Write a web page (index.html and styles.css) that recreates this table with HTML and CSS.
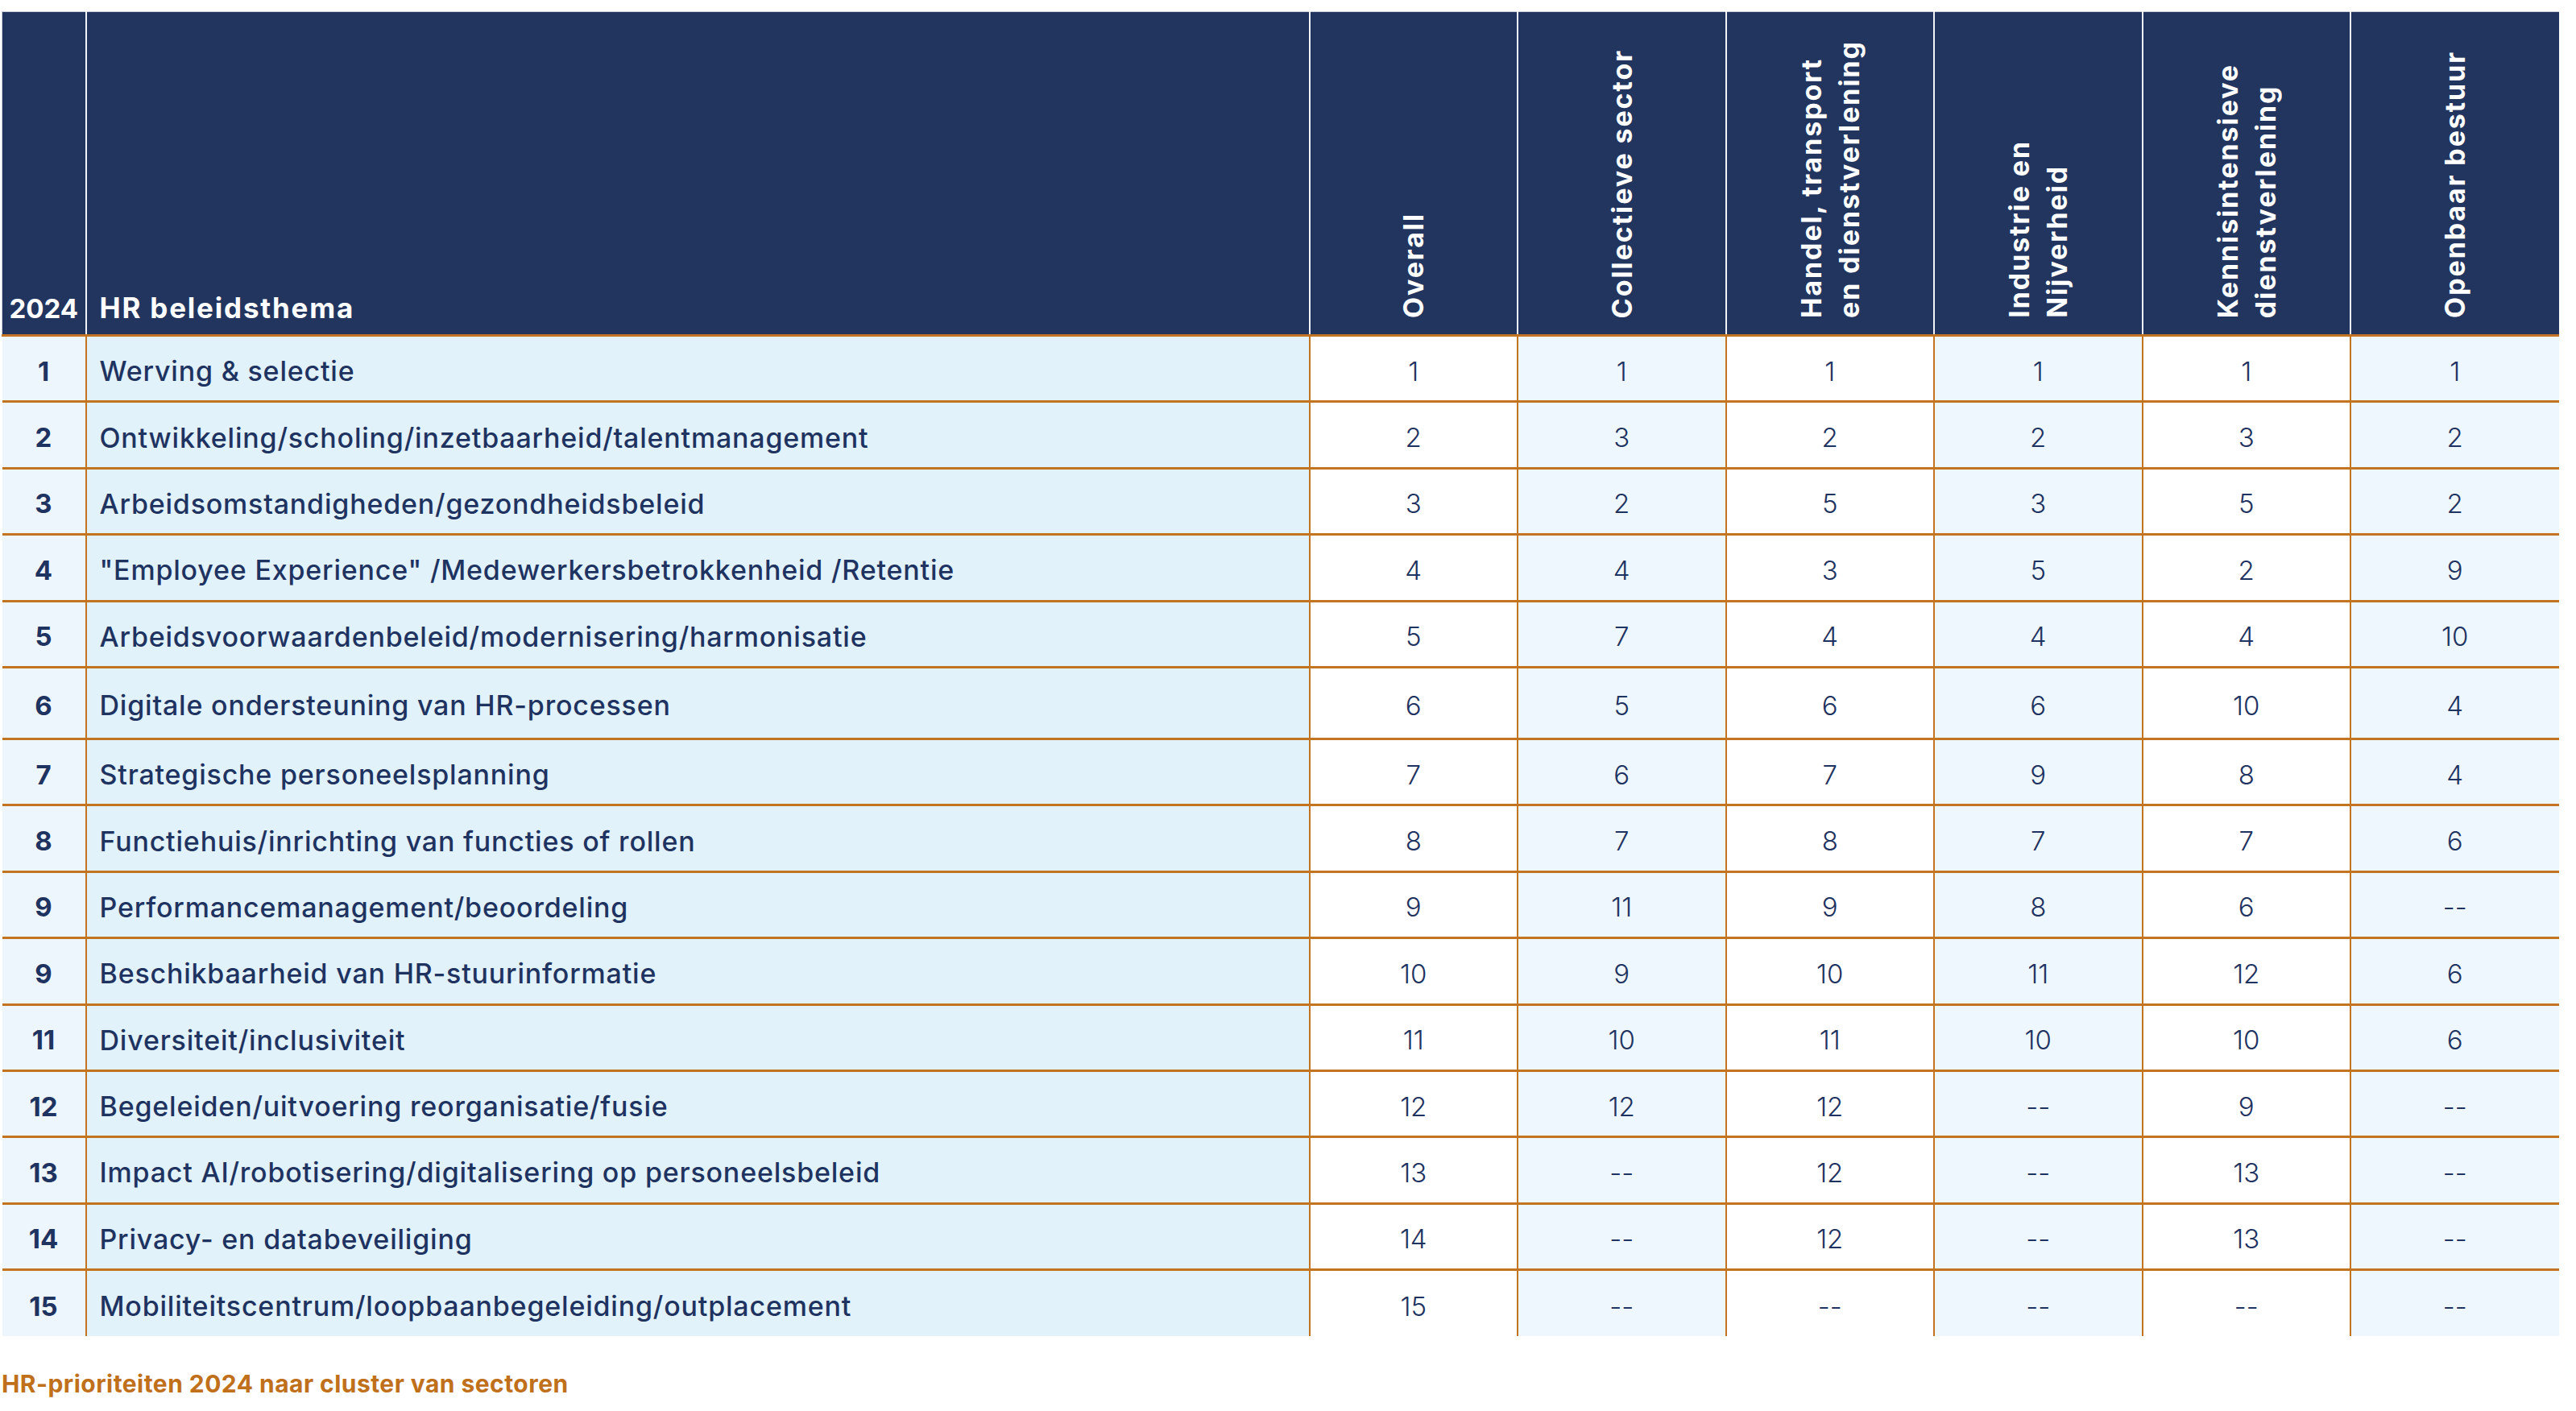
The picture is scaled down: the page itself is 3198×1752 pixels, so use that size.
FILE: index.html
```html
<!DOCTYPE html>
<html lang="nl">
<head>
<meta charset="utf-8">
<title>HR-prioriteiten 2024</title>
<link rel="stylesheet" href="styles.css">
</head>
<body>
<div class="page">
  <table class="grid">
    <colgroup>
      <col class="c-rank"><col class="c-theme">
      <col class="c-val"><col class="c-val"><col class="c-val"><col class="c-val"><col class="c-val"><col class="c-val">
    </colgroup>
    <thead>
      <tr>
        <th class="h-rank">2024</th>
        <th class="h-theme">HR beleidsthema</th>
        <th class="h-rot"><div class="rot">Overall</div></th>
        <th class="h-rot"><div class="rot">Collectieve sector</div></th>
        <th class="h-rot"><div class="rot">Handel, transport<br>en dienstverlening</div></th>
        <th class="h-rot"><div class="rot">Industrie en<br>Nijverheid</div></th>
        <th class="h-rot"><div class="rot">Kennisintensieve<br>dienstverlening</div></th>
        <th class="h-rot"><div class="rot">Openbaar bestuur</div></th>
      </tr>
    </thead>
    <tbody>
      <tr><td class="rank">1</td><td class="theme">Werving &amp; selectie</td><td class="v">1</td><td class="v alt">1</td><td class="v">1</td><td class="v alt">1</td><td class="v">1</td><td class="v alt">1</td></tr>
      <tr><td class="rank">2</td><td class="theme">Ontwikkeling/scholing/inzetbaarheid/talentmanagement</td><td class="v">2</td><td class="v alt">3</td><td class="v">2</td><td class="v alt">2</td><td class="v">3</td><td class="v alt">2</td></tr>
      <tr><td class="rank">3</td><td class="theme">Arbeidsomstandigheden/gezondheidsbeleid</td><td class="v">3</td><td class="v alt">2</td><td class="v">5</td><td class="v alt">3</td><td class="v">5</td><td class="v alt">2</td></tr>
      <tr><td class="rank">4</td><td class="theme">"Employee Experience" /Medewerkersbetrokkenheid /Retentie</td><td class="v">4</td><td class="v alt">4</td><td class="v">3</td><td class="v alt">5</td><td class="v">2</td><td class="v alt">9</td></tr>
      <tr><td class="rank">5</td><td class="theme">Arbeidsvoorwaardenbeleid/modernisering/harmonisatie</td><td class="v">5</td><td class="v alt">7</td><td class="v">4</td><td class="v alt">4</td><td class="v">4</td><td class="v alt">10</td></tr>
      <tr class="tall"><td class="rank">6</td><td class="theme">Digitale ondersteuning van HR-processen</td><td class="v">6</td><td class="v alt">5</td><td class="v">6</td><td class="v alt">6</td><td class="v">10</td><td class="v alt">4</td></tr>
      <tr><td class="rank">7</td><td class="theme">Strategische personeelsplanning</td><td class="v">7</td><td class="v alt">6</td><td class="v">7</td><td class="v alt">9</td><td class="v">8</td><td class="v alt">4</td></tr>
      <tr><td class="rank">8</td><td class="theme">Functiehuis/inrichting van functies of rollen</td><td class="v">8</td><td class="v alt">7</td><td class="v">8</td><td class="v alt">7</td><td class="v">7</td><td class="v alt">6</td></tr>
      <tr><td class="rank">9</td><td class="theme">Performancemanagement/beoordeling</td><td class="v">9</td><td class="v alt">11</td><td class="v">9</td><td class="v alt">8</td><td class="v">6</td><td class="v alt">--</td></tr>
      <tr><td class="rank">9</td><td class="theme">Beschikbaarheid van HR-stuurinformatie</td><td class="v">10</td><td class="v alt">9</td><td class="v">10</td><td class="v alt">11</td><td class="v">12</td><td class="v alt">6</td></tr>
      <tr><td class="rank">11</td><td class="theme">Diversiteit/inclusiviteit</td><td class="v">11</td><td class="v alt">10</td><td class="v">11</td><td class="v alt">10</td><td class="v">10</td><td class="v alt">6</td></tr>
      <tr><td class="rank">12</td><td class="theme">Begeleiden/uitvoering reorganisatie/fusie</td><td class="v">12</td><td class="v alt">12</td><td class="v">12</td><td class="v alt">--</td><td class="v">9</td><td class="v alt">--</td></tr>
      <tr><td class="rank">13</td><td class="theme">Impact AI/robotisering/digitalisering op personeelsbeleid</td><td class="v">13</td><td class="v alt">--</td><td class="v">12</td><td class="v alt">--</td><td class="v">13</td><td class="v alt">--</td></tr>
      <tr><td class="rank">14</td><td class="theme">Privacy- en databeveiliging</td><td class="v">14</td><td class="v alt">--</td><td class="v">12</td><td class="v alt">--</td><td class="v">13</td><td class="v alt">--</td></tr>
      <tr class="last"><td class="rank">15</td><td class="theme">Mobiliteitscentrum/loopbaanbegeleiding/outplacement</td><td class="v">15</td><td class="v alt">--</td><td class="v">--</td><td class="v alt">--</td><td class="v">--</td><td class="v alt">--</td></tr>
    </tbody>
  </table>
  <p class="caption">HR-prioriteiten 2024 naar cluster van sectoren</p>
</div>
</body>
</html>
```

FILE: styles.css
```css
html, body {
  margin: 0;
  padding: 0;
  background: #ffffff;
}

.page {
  padding: 14px 0 0 2px;
  font-family: Inter, "Open Sans", sans-serif;
  color: #1f3361;
}

.grid {
  width: 3174px;
  border-collapse: collapse;
  table-layout: fixed;
}

.c-rank { width: 104px; }
.c-theme { width: 1519px; }
.c-val { width: 258.5px; }

thead th {
  background: #22355f;
  color: #ffffff;
  font-weight: 700;
  height: 402px;
  padding: 0 0 16px 0;
  vertical-align: bottom;
  border-top: 1px solid #c9ccd4;
  border-left: 2px solid #f2f3f6;
  border-bottom: 3px solid #c27420;
  box-sizing: border-box;
}

thead th:first-child { border-left: 1px solid #c9ccd4; }

.h-rank {
  font-size: 33px;
  text-align: center;
  padding-bottom: 12px;
}

.h-theme {
  font-size: 35px;
  letter-spacing: 1.8px;
  text-align: left;
  padding-left: 16px;
  padding-bottom: 12px;
}

.h-rot {
  text-align: center;
}

.rot {
  display: inline-block;
  writing-mode: vertical-rl;
  transform: rotate(180deg);
  text-align: start;
  font-size: 34px;
  line-height: 47px;
  letter-spacing: 1.9px;
  white-space: nowrap;
}

tbody tr { height: 82.4px; }
tbody tr.tall { height: 89px; }

tbody td {
  border-bottom: 3px solid #c27420;
  border-left: 2px solid #c27420;
  padding: 6px 0 0 0;
  vertical-align: middle;
}

tbody tr.last td { border-bottom: 0; }

tbody td:first-child { border-left: 0; }

.rank {
  background: #eef6fd;
  font-weight: 700;
  font-size: 33px;
  text-align: center;
}

.theme {
  background: #e1f2fb;
  font-weight: 500;
  font-size: 34px;
  letter-spacing: 0.8px;
  padding-left: 16px;
}

.v {
  background: #ffffff;
  font-weight: 300;
  font-size: 33px;
  text-align: center;
}

.v.alt { background: #edf7fd; }

.caption {
  margin: 41px 0 0 0;
  color: #c0701a;
  font-weight: 700;
  font-size: 30px;
  letter-spacing: 0.45px;
}
```
